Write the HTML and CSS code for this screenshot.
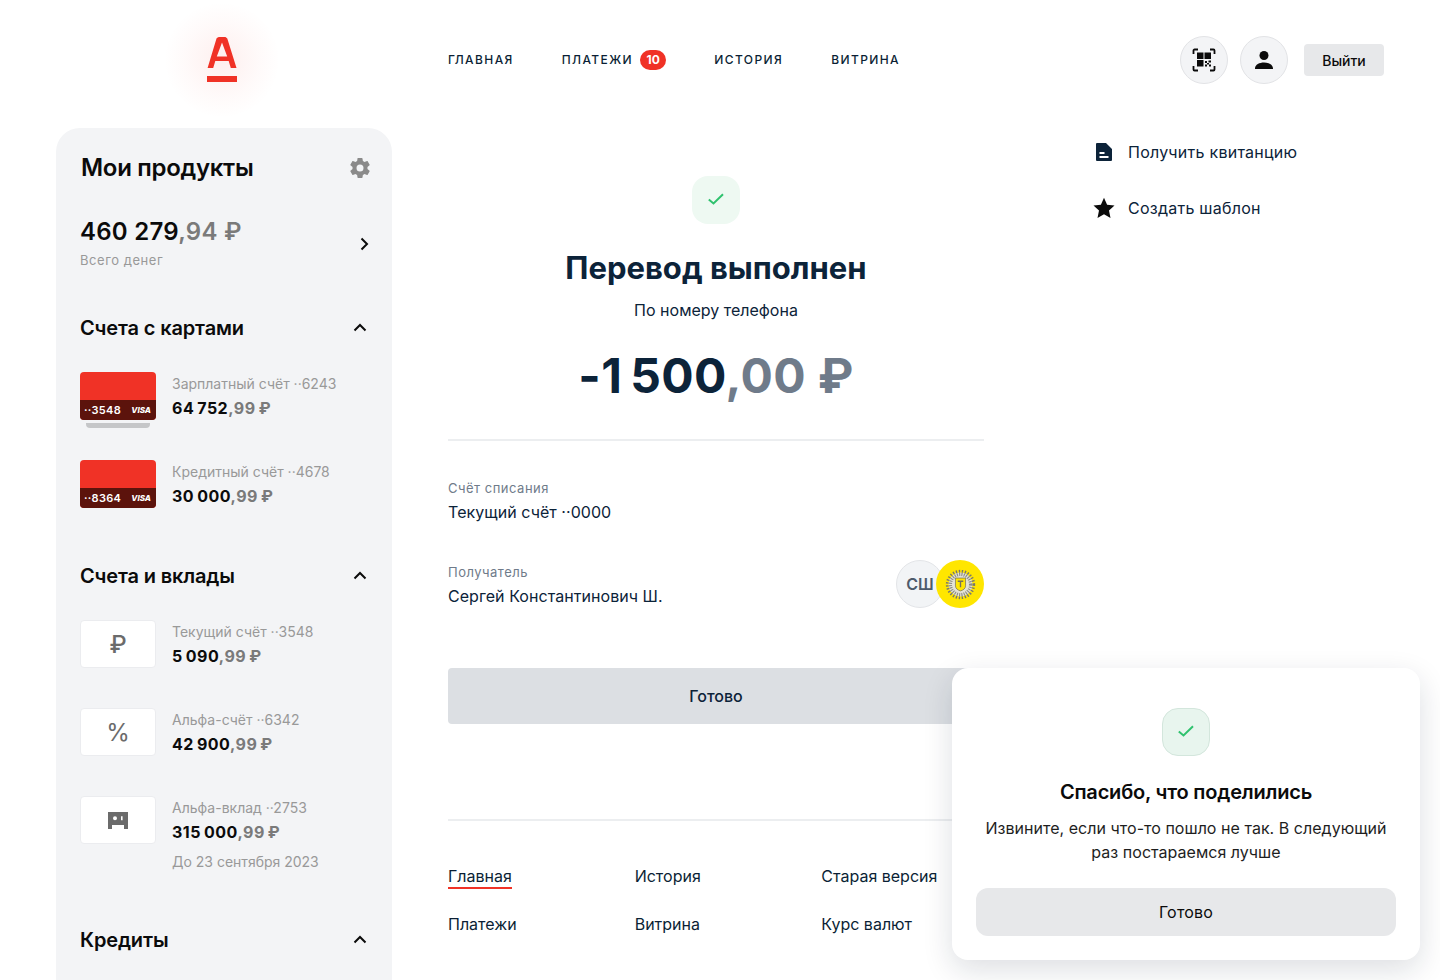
FILE: index.html
```html
<!DOCTYPE html>
<html lang="ru">
<head>
    <meta charset="UTF-8">
    <meta name="viewport" content="width=device-width, initial-scale=1.0">
    <title>Перевод выполнен</title>
    <link rel="stylesheet" href="styles.css">
</head>
<body>
    <header class="header">
        <div class="logo-box">
            <svg class="logo" width="32" height="46" viewBox="0 0 32 46">
                <path fill="#f03226" d="M10.500 1.500 C11.300 0.500 12.500 0 13.500 0 H18.500 C19.700 0 20.700 0.600 21.300 1.600 L30.500 31 H24.800 L22.700 24 H9.300 L7.200 31 H1.600 Z M16 5.500 L10.800 19.500 H21.200 Z"/>
                <rect fill="#f03226" x="1" y="39" width="30" height="6"/>
            </svg>
        </div>
        <nav class="nav">
            <a class="nav-link">Главная</a>
            <a class="nav-link">Платежи <span class="nav-badge">10</span></a>
            <a class="nav-link">История</a>
            <a class="nav-link">Витрина</a>
        </nav>
        <div class="header-actions">
            <button class="round-btn">
                <svg width="24" height="24" viewBox="0 0 24 24">
                    <path fill="none" stroke="#0b0b0b" stroke-width="1.800" d="M1.500 6V2.500a1 1 0 0 1 1-1H6M18 1.500h3.500a1 1 0 0 1 1 1V6M1.500 18v3.500a1 1 0 0 0 1 1H6M18 22.500h3.500a1 1 0 0 0 1-1V18"/>
                    <rect x="5" y="4.500" width="6.500" height="6.500" fill="#0b0b0b"/>
                    <rect x="12.500" y="4.500" width="6.500" height="6.500" fill="#0b0b0b"/>
                    <rect x="5" y="12" width="6.500" height="6.500" fill="#0b0b0b"/>
                    <path fill="#0b0b0b" d="M13 13h2v2h-2zM16.500 12.500h2.500v2h-2.500zM15 15h2v1.500h-2zM13 16.500h2v2h-2zM17 16.500h2v2h-2z"/>
                </svg>
            </button>
            <button class="round-btn">
                <svg width="24" height="24" viewBox="0 0 24 24">
                    <circle cx="12" cy="7.500" r="4.500" fill="#0b0b0b"/>
                    <path fill="#0b0b0b" d="M3 20.500c0-4 4.500-6 9-6s9 2 9 6v.5H3z"/>
                </svg>
            </button>
            <button class="logout-btn">Выйти</button>
        </div>
    </header>

    <div class="layout">
        <aside class="sidebar">
            <div class="sidebar-top">
                <h2 class="sidebar-title">Мои продукты</h2>
                <svg width="24" height="24" viewBox="0 0 24 24">
                    <path fill="#8a8a8a" d="M19.430 12.980c.04-.32.070-.64.070-.98s-.030-.66-.070-.98l2.110-1.650c.190-.150.240-.420.120-.640l-2-3.460c-.120-.220-.390-.300-.610-.220l-2.490 1c-.520-.400-1.080-.730-1.690-.980l-.380-2.650A.488.488 0 0 0 14 2h-4c-.250 0-.460.180-.490.420l-.380 2.650c-.610.250-1.170.590-1.690.980l-2.490-1c-.230-.090-.490 0-.610.220l-2 3.460c-.130.220-.070.490.120.640l2.110 1.650c-.040.320-.070.650-.070.980s.030.660.070.980l-2.110 1.650c-.190.150-.240.420-.120.640l2 3.460c.120.220.390.300.610.220l2.490-1c.520.400 1.080.730 1.690.980l.380 2.650c.030.240.240.420.490.420h4c.250 0 .460-.180.490-.420l.380-2.650c.610-.250 1.170-.590 1.690-.980l2.490 1c.230.090.490 0 .610-.220l2-3.460c.120-.220.070-.490-.120-.640l-2.110-1.650zM12 15.500a3.500 3.500 0 1 1 0-7 3.500 3.500 0 0 1 0 7z"/>
                </svg>
            </div>

            <div class="total-row">
                <div>
                    <div class="total-sum">460 279<span class="fraction">,94 ₽</span></div>
                    <div class="total-label">Всего денег</div>
                </div>
                <svg class="total-arrow" width="24" height="24" viewBox="0 0 24 24">
                    <path fill="none" stroke="#0b0b0b" stroke-width="2" d="M9.500 6.500 15 12l-5.500 5.500"/>
                </svg>
            </div>

            <div class="section-head section-first">
                <h3 class="section-title">Счета с картами</h3>
                <svg width="24" height="24" viewBox="0 0 24 24"><path fill="none" stroke="#0b0b0b" stroke-width="2" d="M6.500 14.500 12 9l5.500 5.500"/></svg>
            </div>
            <div class="product">
                <div class="card card-stack">
                    <div class="card-strip"><span>··3548</span><i>VISA</i></div>
                </div>
                <div class="product-info">
                    <div class="product-name">Зарплатный счёт ··6243</div>
                    <div class="product-sum">64&thinsp;752<span class="fraction">,99&thinsp;₽</span></div>
                </div>
            </div>
            <div class="product">
                <div class="card">
                    <div class="card-strip"><span>··8364</span><i>VISA</i></div>
                </div>
                <div class="product-info">
                    <div class="product-name">Кредитный счёт ··4678</div>
                    <div class="product-sum">30&thinsp;000<span class="fraction">,99&thinsp;₽</span></div>
                </div>
            </div>

            <div class="section-head">
                <h3 class="section-title">Счета и вклады</h3>
                <svg width="24" height="24" viewBox="0 0 24 24"><path fill="none" stroke="#0b0b0b" stroke-width="2" d="M6.500 14.500 12 9l5.500 5.500"/></svg>
            </div>
            <div class="product">
                <div class="tile">₽</div>
                <div class="product-info">
                    <div class="product-name">Текущий счёт ··3548</div>
                    <div class="product-sum">5&thinsp;090<span class="fraction">,99&thinsp;₽</span></div>
                </div>
            </div>
            <div class="product">
                <div class="tile tile-light">%</div>
                <div class="product-info">
                    <div class="product-name">Альфа-счёт ··6342</div>
                    <div class="product-sum">42&thinsp;900<span class="fraction">,99&thinsp;₽</span></div>
                </div>
            </div>
            <div class="product">
                <div class="tile">
                    <svg width="20" height="17" viewBox="0 0 20 17">
                        <path fill="#6b6b6b" fill-rule="evenodd" d="M0 0h20v17h-4v-4H4v4H0zM7 4.300a2 2 0 1 0 0 4 2 2 0 0 0 0-4zM13 4.300v4h1.600v-4z"/>
                    </svg>
                </div>
                <div class="product-info">
                    <div class="product-name">Альфа-вклад ··2753</div>
                    <div class="product-sum">315&thinsp;000<span class="fraction">,99&thinsp;₽</span></div>
                    <div class="product-note">До 23 сентября 2023</div>
                </div>
            </div>

            <div class="section-head">
                <h3 class="section-title">Кредиты</h3>
                <svg width="24" height="24" viewBox="0 0 24 24"><path fill="none" stroke="#0b0b0b" stroke-width="2" d="M6.500 14.500 12 9l5.500 5.500"/></svg>
            </div>
        </aside>

        <main class="main">
            <div class="result">
                <div class="check-box">
                    <svg width="16" height="16" viewBox="0 0 16 16"><path fill="none" stroke="#2fc26e" stroke-width="2" d="M.8 7.500 5.500 11.500 15 2.200"/></svg>
                </div>
                <h1 class="result-title">Перевод выполнен</h1>
                <p class="result-sub">По номеру телефона</p>
                <div class="result-sum">-1&thinsp;500<span class="result-fraction">,00 ₽</span></div>
            </div>

            <div class="details">
                <div class="detail">
                    <div class="detail-label">Счёт списания</div>
                    <div class="detail-value">Текущий счёт ··0000</div>
                </div>
                <div class="detail detail-recipient">
                    <div>
                        <div class="detail-label">Получатель</div>
                        <div class="detail-value">Сергей Константинович Ш.</div>
                    </div>
                    <div class="avatars">
                        <div class="avatar-text">СШ</div>
                        <div class="avatar-bank">
                            <svg width="33" height="33" viewBox="0 0 36 36">
                                <circle cx="18" cy="18" r="13" fill="#e4e3d6"/>
                                <circle cx="18" cy="18" r="14.500" fill="none" stroke="#77776f" stroke-width="3" stroke-dasharray="1.500 1.800"/>
                                <circle cx="18" cy="18" r="11" fill="none" stroke="#8b8b82" stroke-width="3.500" stroke-dasharray="1.200 1.300"/>
                                <path fill="#ffe600" stroke="#77725a" stroke-width=".8" d="M12.500 11h11v8.500c0 3-2.500 4.500-5.500 5.500-3-1-5.500-2.500-5.500-5.500z"/>
                                <path fill="none" stroke="#77725a" stroke-width="1.500" d="M15 14.500h6M18 14.500v6.500"/>
                            </svg>
                        </div>
                    </div>
                </div>
            </div>

            <button class="done-btn">Готово</button>

            <footer class="footer">
                <a class="footer-link footer-active">Главная</a>
                <a class="footer-link">История</a>
                <a class="footer-link">Старая версия</a>
                <a class="footer-link">Платежи</a>
                <a class="footer-link">Витрина</a>
                <a class="footer-link">Курс валют</a>
            </footer>
        </main>

        <aside class="actions">
            <a class="action">
                <svg width="24" height="24" viewBox="0 0 24 24">
                    <path fill="#0c2339" fill-rule="evenodd" d="M4 4a1 1 0 0 1 1-1h9l6 6v11a1 1 0 0 1-1 1H5a1 1 0 0 1-1-1zM7.500 12v2h5v-2zM7.500 16v2h9v-2z"/>
                </svg>
                <span>Получить квитанцию</span>
            </a>
            <a class="action">
                <svg width="24" height="24" viewBox="0 0 24 24">
                    <path fill="#0b0b0b" d="M12 1.800l3.100 6.900 7.400.8-5.500 5 1.500 7.400L12 18.200l-6.500 3.700L7 14.500l-5.500-5 7.400-.8z"/>
                </svg>
                <span>Создать шаблон</span>
            </a>
        </aside>
    </div>

    <div class="popup">
        <div class="popup-check">
            <svg width="16" height="16" viewBox="0 0 16 16"><path fill="none" stroke="#2fc26e" stroke-width="2" d="M.8 7.500 5.500 11.500 15 2.200"/></svg>
        </div>
        <h4 class="popup-title">Спасибо, что поделились</h4>
        <p class="popup-text">Извините, если что-то пошло не так. В следующий раз постараемся лучше</p>
        <button class="popup-btn">Готово</button>
    </div>
</body>
</html>
```

FILE: styles.css
```css
html {
    height: 980px;
    overflow: hidden;
}
body {
    margin: 0;
    height: 980px;
    overflow: hidden;
    font-family: Inter, "Noto Sans", sans-serif;
    color: #0b0b0b;
    background-color: #fff;
}
h1, h2, h3, h4, p {
    margin: 0;
}
button {
    font-family: Inter, "Noto Sans", sans-serif;
    border: none;
    cursor: pointer;
}

/* header */
.header {
    display: flex;
    align-items: center;
    height: 120px;
    padding: 0 56px;
    box-sizing: border-box;
}
.logo-box {
    width: 336px;
    height: 120px;
    display: flex;
    align-items: center;
    justify-content: center;
    margin-right: 56px;
    background: radial-gradient(circle at 166px 60px, rgba(240, 50, 38, 0.08) 0, rgba(240, 50, 38, 0.025) 38px, rgba(240, 50, 38, 0) 58px);
}
.logo {
    margin-right: 4px;
}
.nav {
    display: flex;
    align-items: center;
    gap: 48px;
    margin-top: -1px;
}
.nav-link {
    display: flex;
    align-items: center;
    gap: 7px;
    font-size: 12px;
    font-weight: 500;
    letter-spacing: 1.4px;
    text-transform: uppercase;
    color: #0b1f35;
}
.nav-badge {
    background-color: #f03226;
    color: #fff;
    border-radius: 10px;
    padding: 0 6.5px;
    height: 20px;
    line-height: 20px;
    font-size: 12px;
    font-weight: 700;
    letter-spacing: 0;
}
.header-actions {
    display: flex;
    align-items: center;
    gap: 12px;
    margin-left: auto;
}
.round-btn {
    width: 48px;
    height: 48px;
    padding: 0;
    border-radius: 50%;
    border: 1px solid #e2e3e6;
    background-color: #f3f4f6;
    display: flex;
    align-items: center;
    justify-content: center;
}
.logout-btn {
    width: 80px;
    height: 32px;
    margin-left: 4px;
    background-color: #e7e8ea;
    border-radius: 4px;
    font-size: 14px;
    font-weight: 500;
    color: #0b0b0b;
}

/* page columns */
.layout {
    display: flex;
    align-items: flex-start;
    padding: 8px 0 0 56px;
}
.sidebar {
    width: 336px;
    height: 900px;
    flex-shrink: 0;
    box-sizing: border-box;
    padding: 24px 24px 0;
    background-color: #f3f4f6;
    border-radius: 24px 24px 0 0;
}
.sidebar-top {
    display: flex;
    align-items: center;
    justify-content: space-between;
    height: 32px;
    margin-right: -4px;
}
.sidebar-title {
    font-size: 24px;
    line-height: 32px;
    font-weight: 600;
    letter-spacing: -0.3px;
    padding-left: 1px;
}
.total-row {
    display: flex;
    align-items: center;
    justify-content: space-between;
    margin-top: 32px;
}
.total-sum {
    font-size: 24px;
    line-height: 32px;
    font-weight: 600;
    letter-spacing: 0.25px;
}
.fraction {
    color: #7a7a7a;
}
.total-label {
    margin-top: 4px;
    font-size: 13px;
    line-height: 16px;
    letter-spacing: 0.55px;
    color: #999;
}
.total-arrow {
    margin: 4px -8px 0 0;
}
.section-head {
    display: flex;
    align-items: center;
    justify-content: space-between;
    height: 32px;
    margin-top: 52px;
    margin-bottom: 28px;
    margin-right: -4px;
}
.section-first {
    margin-top: 44px;
}
.section-title {
    font-size: 20px;
    line-height: 32px;
    font-weight: 600;
    letter-spacing: -0.15px;
}
.product {
    display: flex;
    gap: 16px;
    min-height: 48px;
    margin-bottom: 40px;
}
.card {
    position: relative;
    width: 76px;
    height: 48px;
    flex-shrink: 0;
    border-radius: 4px;
    background-color: #f03226;
    display: flex;
    align-items: flex-end;
}
.card-stack::after {
    content: "";
    position: absolute;
    left: 6px;
    right: 6px;
    top: 51px;
    height: 5px;
    background-color: #c5c6c8;
    border-radius: 0 0 4px 4px;
}
.card-strip {
    width: 100%;
    height: 20px;
    box-sizing: border-box;
    padding: 0 5px 0 4px;
    border-radius: 0 0 4px 4px;
    background-color: #5c130c;
    color: #fff;
    display: flex;
    align-items: center;
    justify-content: space-between;
    font-size: 11px;
    font-weight: 600;
    letter-spacing: 0.3px;
}
.card-strip i {
    font-size: 8px;
    font-weight: 800;
    letter-spacing: 0;
}
.tile {
    width: 76px;
    height: 48px;
    flex-shrink: 0;
    box-sizing: border-box;
    border: 1px solid #ebecef;
    border-radius: 4px;
    background-color: #fff;
    color: #6b6b6b;
    display: flex;
    align-items: center;
    justify-content: center;
    font-size: 24px;
    font-weight: 500;
}
.tile-light {
    font-weight: 400;
}
.product-info {
    padding-top: 2px;
}
.product-name {
    font-size: 14px;
    line-height: 20px;
    color: #999;
}
.product-sum {
    margin-top: 4px;
    font-size: 16px;
    line-height: 20px;
    font-weight: 700;
    letter-spacing: 0.5px;
}
.product-note {
    margin-top: 10px;
    font-size: 14px;
    line-height: 20px;
    color: #999;
}

/* main column */
.main {
    width: 536px;
    margin-left: 56px;
    flex-shrink: 0;
}
.result {
    display: flex;
    flex-direction: column;
    align-items: center;
    padding-top: 48px;
    height: 313px;
    box-sizing: border-box;
    border-bottom: 2px solid #eceef0;
}
.check-box {
    width: 48px;
    height: 48px;
    border-radius: 16px;
    background-color: #eef9f2;
    display: flex;
    align-items: center;
    justify-content: center;
}
.result-title {
    margin-top: 24px;
    font-size: 31px;
    line-height: 40px;
    font-weight: 700;
    color: #0c2339;
}
.result-sub {
    margin-top: 10px;
    font-size: 16px;
    line-height: 24px;
    color: #0c2339;
}
.result-sum {
    margin-top: 22px;
    font-size: 48px;
    line-height: 64px;
    font-weight: 700;
    letter-spacing: 0.4px;
    color: #0c2339;
}
.result-fraction {
    color: #6f7b8a;
}
.details {
    padding-top: 39px;
}
.detail {
    height: 84px;
}
.detail-recipient {
    display: flex;
    align-items: flex-start;
    justify-content: space-between;
}
.detail-label {
    font-size: 13px;
    line-height: 16px;
    letter-spacing: 0.5px;
    color: #6f7b8a;
}
.detail-value {
    margin-top: 4px;
    font-size: 16px;
    line-height: 24px;
    letter-spacing: 0.05px;
    color: #0c2339;
}
.avatars {
    display: flex;
    margin-top: -4px;
}
.avatar-text {
    width: 48px;
    height: 48px;
    box-sizing: border-box;
    border: 1px solid #e3e5e8;
    border-radius: 50%;
    background-color: #f2f4f6;
    color: #4e5b6b;
    font-size: 16px;
    font-weight: 600;
    line-height: 46px;
    text-align: center;
}
.avatar-bank {
    width: 48px;
    height: 48px;
    margin-left: -8px;
    border-radius: 50%;
    background-color: #ffe600;
    display: flex;
    align-items: center;
    justify-content: center;
}
.done-btn {
    display: block;
    width: 100%;
    height: 56px;
    margin-top: 20px;
    border-radius: 4px;
    background-color: #dcdfe3;
    color: #0c2339;
    font-size: 16px;
    font-weight: 500;
}
.footer {
    display: grid;
    grid-template-columns: 186.67px 186.67px 186.67px;
    row-gap: 23px;
    margin-top: 95px;
    padding-top: 43px;
    border-top: 2px solid #eceef0;
}
.footer-link {
    justify-self: start;
    font-size: 16px;
    line-height: 24px;
    color: #0b1f35;
}
.footer-active {
    border-bottom: 2px solid #f03226;
    height: 23px;
}

/* right column */
.actions {
    margin-left: 108px;
    padding-top: 12px;
    display: flex;
    flex-direction: column;
    gap: 32px;
}
.action {
    display: flex;
    align-items: center;
    gap: 12px;
    height: 24px;
    font-size: 16px;
    letter-spacing: 0.25px;
    color: #0c2339;
}

/* feedback popup */
.popup {
    position: absolute;
    left: 952px;
    top: 668px;
    width: 468px;
    height: 292px;
    box-sizing: border-box;
    padding: 40px 24px 24px;
    border-radius: 16px;
    background-color: #fff;
    box-shadow: 0 10px 30px rgba(11, 31, 53, 0.14);
    text-align: center;
}
.popup-check {
    width: 48px;
    height: 48px;
    margin: 0 auto;
    box-sizing: border-box;
    border: 1px solid #d3e6dc;
    border-radius: 16px;
    background-color: #e8f5ee;
    display: flex;
    align-items: center;
    justify-content: center;
}
.popup-title {
    margin-top: 24px;
    font-size: 20px;
    line-height: 24px;
    font-weight: 600;
    letter-spacing: -0.2px;
    color: #0b0b0b;
}
.popup-text {
    margin-top: 12px;
    font-size: 16px;
    line-height: 24px;
    letter-spacing: 0.03px;
    color: #1e1e1e;
}
.popup-btn {
    display: block;
    width: 100%;
    height: 48px;
    margin-top: 24px;
    border-radius: 12px;
    background-color: #e7e8ea;
    color: #0b0b0b;
    font-size: 16px;
    font-weight: 400;
    letter-spacing: 0.2px;
}
```
